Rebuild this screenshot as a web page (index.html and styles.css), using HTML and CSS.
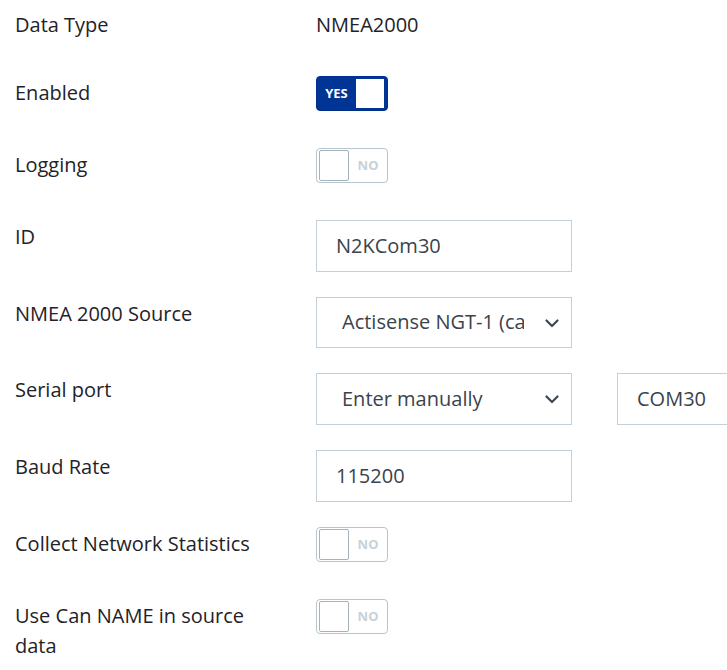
FILE: index.html
```html
<!DOCTYPE html>
<html lang="en">
<head>
<meta charset="utf-8">
<title>Connection</title>
<link rel="stylesheet" href="styles.css">
</head>
<body>
<div class="form">
  <div class="row row-text">
    <div class="label">Data Type</div>
    <div class="value">NMEA2000</div>
  </div>
  <div class="row row-toggle">
    <div class="label">Enabled</div>
    <div class="toggle on"><span class="tlabel">YES</span><span class="knob"></span></div>
  </div>
  <div class="row row-toggle">
    <div class="label">Logging</div>
    <div class="toggle off"><span class="knob"></span><span class="tlabel">NO</span></div>
  </div>
  <div class="row row-input">
    <div class="label">ID</div>
    <div class="input">N2KCom30</div>
  </div>
  <div class="row row-input">
    <div class="label">NMEA 2000 Source</div>
    <div class="input select"><span class="sel-text">Actisense NGT-1 (canboatjs)</span>
      <svg class="chev" width="14" height="9" viewBox="0 0 14 9"><path d="M1.5 1.5 L7 7 L12.5 1.5" fill="none" stroke="#3d4852" stroke-width="2.2" stroke-linecap="round" stroke-linejoin="round"/></svg>
    </div>
  </div>
  <div class="row row-input">
    <div class="label">Serial port</div>
    <div class="input select"><span class="sel-text">Enter manually</span>
      <svg class="chev" width="14" height="9" viewBox="0 0 14 9"><path d="M1.5 1.5 L7 7 L12.5 1.5" fill="none" stroke="#3d4852" stroke-width="2.2" stroke-linecap="round" stroke-linejoin="round"/></svg>
    </div>
    <div class="input extra">COM30</div>
  </div>
  <div class="row row-input">
    <div class="label">Baud Rate</div>
    <div class="input">115200</div>
  </div>
  <div class="row row-toggle">
    <div class="label">Collect Network Statistics</div>
    <div class="toggle off"><span class="knob"></span><span class="tlabel">NO</span></div>
  </div>
  <div class="row row-toggle">
    <div class="label">Use Can NAME in source data</div>
    <div class="toggle off"><span class="knob"></span><span class="tlabel">NO</span></div>
  </div>
</div>
</body>
</html>
```
FILE: styles.css
```css
html, body {
  margin: 0;
  padding: 0;
  background: #fff;
}
body {
  font-family: "Open Sans", "Noto Sans", sans-serif;
  font-size: 20px;
  line-height: 30px;
  color: #1f2328;
  overflow: hidden;
}
.form {
  display: flex;
  flex-direction: column;
  gap: 25px;
  padding-top: 8px;
}
.row {
  display: flex;
  align-items: flex-start;
}
.row-text { min-height: 43px; }
.row-toggle { min-height: 47px; }
.label {
  box-sizing: border-box;
  width: 316px;
  flex: 0 0 316px;
  padding: 2px 40px 0 15px;
}
.value {
  padding-top: 2px;
}
.input {
  box-sizing: border-box;
  width: 256px;
  flex: 0 0 256px;
  height: 51.67px;
  border: 1px solid #c4d0d9;
  background: #fff;
  color: #3a434c;
  padding: 0 19px;
  display: flex;
  align-items: center;
  white-space: nowrap;
  overflow: hidden;
}
.select {
  padding: 0 10px 0 25px;
  position: relative;
}
.sel-text {
  flex: 1 1 auto;
  overflow: hidden;
  min-width: 0;
  max-width: 182px;
}
.chev {
  position: absolute;
  right: 12px;
  top: 21px;
}
.extra {
  margin-left: 45px;
  flex: 0 0 200px;
  width: 200px;
}
.toggle {
  box-sizing: border-box;
  width: 72px;
  height: 35px;
  border-radius: 4px;
  display: flex;
  align-items: center;
  font-family: "Noto Sans", "Open Sans", sans-serif;
  font-weight: 700;
  font-size: 13px;
  line-height: 1;
}
.toggle.on {
  background: #003595;
  border: 1px solid #002f88;
  padding: 0 3px 0 0;
}
.toggle.on .tlabel {
  flex: 1;
  text-align: center;
  color: #fff;
}
.toggle.on .knob {
  width: 28px;
  height: 29px;
  background: #fff;
}
.toggle.off {
  background: #fff;
  border: 1px solid #b8c5cd;
  padding: 0 0 0 2px;
}
.toggle.off .knob {
  box-sizing: border-box;
  width: 30px;
  height: 31px;
  border: 1px solid #a4b3bc;
  border-radius: 2px;
}
.toggle.off .tlabel {
  flex: 1;
  text-align: center;
  color: #c6d2da;
}
```
